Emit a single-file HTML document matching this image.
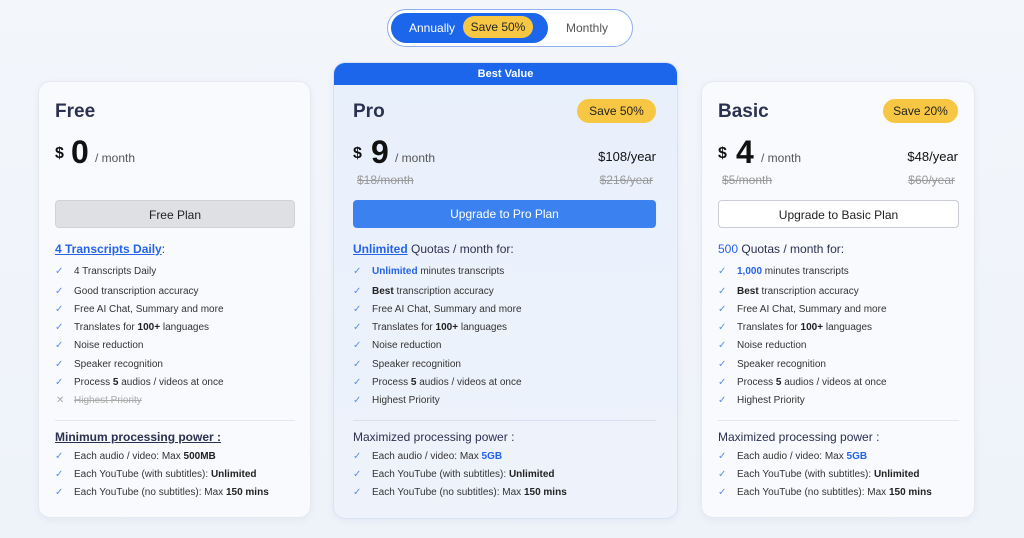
<!DOCTYPE html>
<html><head><meta charset="utf-8"><style>
*{margin:0;padding:0;box-sizing:border-box}
body{width:1024px;height:538px;overflow:hidden;background:linear-gradient(180deg,#f3f6fb,#eef2f9);font-family:"Liberation Sans",sans-serif;color:#2a2f45;position:relative}
.a{position:absolute;white-space:nowrap}
.card{position:absolute;background:#f9fafd;border:1px solid #e6e9f0;border-radius:12px;box-shadow:0 2px 8px rgba(40,60,120,.05)}
.t{font-size:19px;font-weight:bold;color:#2b3150}
.dl{font-size:16px;font-weight:bold;color:#111}
.big{font-size:32px;font-weight:bold;color:#111}
.mo{font-size:12px;color:#555}
.yr{font-size:13px;color:#111}
.st{font-size:12px;color:#999;text-decoration:line-through}
.badge{background:#f7c744;border-radius:13px;font-size:12px;color:#222;height:24px;line-height:24px;width:79px;text-align:center}
.btn{height:28px;border-radius:4px;font-size:12px;text-align:center;line-height:28px}
.h{font-size:12px;color:#2b3150}
.blue{color:#2563eb}
.li{font-size:10px;color:#333}
.li:before{content:"✓";color:#5b8fe8;font-size:10px;position:absolute;left:-19px;top:0}
b{color:#222}
.div{position:absolute;height:1px;background:#e3e6ee}
</style></head><body>
<div class="a" style="left:387px;top:9px;width:246px;height:38px;border:1.5px solid #8fb0f0;border-radius:19px;background:#fff"></div>
<div class="a" style="left:391px;top:13px;width:157px;height:30px;border-radius:15px;background:#1b66ea"></div>
<div class="a" style="left:409px;top:21px;font-size:12px;color:#fff">Annually</div>
<div class="a badge" style="left:463px;top:16px;height:22px;line-height:22px;width:70px">Save 50%</div>
<div class="a" style="left:566px;top:21px;font-size:12px;color:#555">Monthly</div>

<!-- Free -->
<div class="card" style="left:38px;top:81px;width:273px;height:437px"></div>
<div class="a t" style="left:55px;top:101px">Free</div>
<div class="a dl" style="left:55px;top:145px">$</div>
<div class="a big" style="left:71px;top:134px">0</div>
<div class="a mo" style="left:95px;top:151px">/ month</div>
<div class="a btn" style="left:55px;top:200px;width:240px;background:#dfe0e3;border:1px solid #d0d2d6;color:#222">Free Plan</div>
<div class="a h" style="left:55px;top:242px"><span class="blue" style="text-decoration:underline;font-weight:bold">4 Transcripts Daily</span>:</div>
<div class="a li" style="left:74px;top:266px">4 Transcripts Daily</div>
<div class="a li" style="left:74px;top:286px">Good transcription accuracy</div>
<div class="a li" style="left:74px;top:304px">Free AI Chat, Summary and more</div>
<div class="a li" style="left:74px;top:322px">Translates for <b>100+</b> languages</div>
<div class="a li" style="left:74px;top:340px">Noise reduction</div>
<div class="a li" style="left:74px;top:359px">Speaker recognition</div>
<div class="a li" style="left:74px;top:377px">Process <b>5</b> audios / videos at once</div>
<div class="a" style="left:56px;top:395px;font-size:10px;color:#aaa">✕</div>
<div class="a" style="left:74px;top:395px;font-size:10px;color:#aaa;text-decoration:line-through">Highest Priority</div>
<div class="div" style="left:55px;top:420px;width:240px"></div>
<div class="a h" style="left:55px;top:430px;font-weight:bold;text-decoration:underline">Minimum processing power :</div>
<div class="a li" style="left:74px;top:451px">Each audio / video: Max <b>500MB</b></div>
<div class="a li" style="left:74px;top:469px">Each YouTube (with subtitles): <b>Unlimited</b></div>
<div class="a li" style="left:74px;top:487px">Each YouTube (no subtitles): Max <b>150 mins</b></div>

<!-- Pro -->
<div class="card" style="left:333px;top:62px;width:345px;height:457px;background:linear-gradient(180deg,#e8f0fc,#eef3fb);border-color:#d7e2f5;overflow:hidden">
<div style="height:22px;background:#1b66ea;color:#fff;font-size:11px;font-weight:bold;text-align:center;line-height:22px">Best Value</div></div>
<div class="a t" style="left:353px;top:101px">Pro</div>
<div class="a badge" style="left:577px;top:99px">Save 50%</div>
<div class="a dl" style="left:353px;top:145px">$</div>
<div class="a big" style="left:371px;top:134px">9</div>
<div class="a mo" style="left:395px;top:151px">/ month</div>
<div class="a yr" style="right:368px;top:149px">$108/year</div>
<div class="a st" style="left:357px;top:173px">$18/month</div>
<div class="a st" style="right:371px;top:173px">$216/year</div>
<div class="a btn" style="left:353px;top:200px;width:303px;background:#3b82f0;color:#fff">Upgrade to Pro Plan</div>
<div class="a h" style="left:353px;top:242px"><span class="blue" style="text-decoration:underline;font-weight:bold">Unlimited</span> Quotas / month for:</div>
<div class="a li" style="left:372px;top:266px"><b class="blue">Unlimited</b> minutes transcripts</div>
<div class="a li" style="left:372px;top:286px"><b>Best</b> transcription accuracy</div>
<div class="a li" style="left:372px;top:304px">Free AI Chat, Summary and more</div>
<div class="a li" style="left:372px;top:322px">Translates for <b>100+</b> languages</div>
<div class="a li" style="left:372px;top:340px">Noise reduction</div>
<div class="a li" style="left:372px;top:359px">Speaker recognition</div>
<div class="a li" style="left:372px;top:377px">Process <b>5</b> audios / videos at once</div>
<div class="a li" style="left:372px;top:395px">Highest Priority</div>
<div class="div" style="left:353px;top:420px;width:303px;background:#d8e0ee"></div>
<div class="a h" style="left:353px;top:430px">Maximized processing power :</div>
<div class="a li" style="left:372px;top:451px">Each audio / video: Max <b class="blue">5GB</b></div>
<div class="a li" style="left:372px;top:469px">Each YouTube (with subtitles): <b>Unlimited</b></div>
<div class="a li" style="left:372px;top:487px">Each YouTube (no subtitles): Max <b>150 mins</b></div>

<!-- Basic -->
<div class="card" style="left:701px;top:81px;width:274px;height:437px"></div>
<div class="a t" style="left:718px;top:101px">Basic</div>
<div class="a badge" style="left:883px;top:99px;width:75px">Save 20%</div>
<div class="a dl" style="left:718px;top:145px">$</div>
<div class="a big" style="left:736px;top:134px">4</div>
<div class="a mo" style="left:761px;top:151px">/ month</div>
<div class="a yr" style="right:66px;top:149px">$48/year</div>
<div class="a st" style="left:722px;top:173px">$5/month</div>
<div class="a st" style="right:69px;top:173px">$60/year</div>
<div class="a btn" style="left:718px;top:200px;width:241px;background:#fff;border:1px solid #c9ccd3;color:#222">Upgrade to Basic Plan</div>
<div class="a h" style="left:718px;top:242px"><span class="blue">500</span> Quotas / month for:</div>
<div class="a li" style="left:737px;top:266px"><b class="blue">1,000</b> minutes transcripts</div>
<div class="a li" style="left:737px;top:286px"><b>Best</b> transcription accuracy</div>
<div class="a li" style="left:737px;top:304px">Free AI Chat, Summary and more</div>
<div class="a li" style="left:737px;top:322px">Translates for <b>100+</b> languages</div>
<div class="a li" style="left:737px;top:340px">Noise reduction</div>
<div class="a li" style="left:737px;top:359px">Speaker recognition</div>
<div class="a li" style="left:737px;top:377px">Process <b>5</b> audios / videos at once</div>
<div class="a li" style="left:737px;top:395px">Highest Priority</div>
<div class="div" style="left:718px;top:420px;width:241px"></div>
<div class="a h" style="left:718px;top:430px">Maximized processing power :</div>
<div class="a li" style="left:737px;top:451px">Each audio / video: Max <b class="blue">5GB</b></div>
<div class="a li" style="left:737px;top:469px">Each YouTube (with subtitles): <b>Unlimited</b></div>
<div class="a li" style="left:737px;top:487px">Each YouTube (no subtitles): Max <b>150 mins</b></div>
</body></html>
